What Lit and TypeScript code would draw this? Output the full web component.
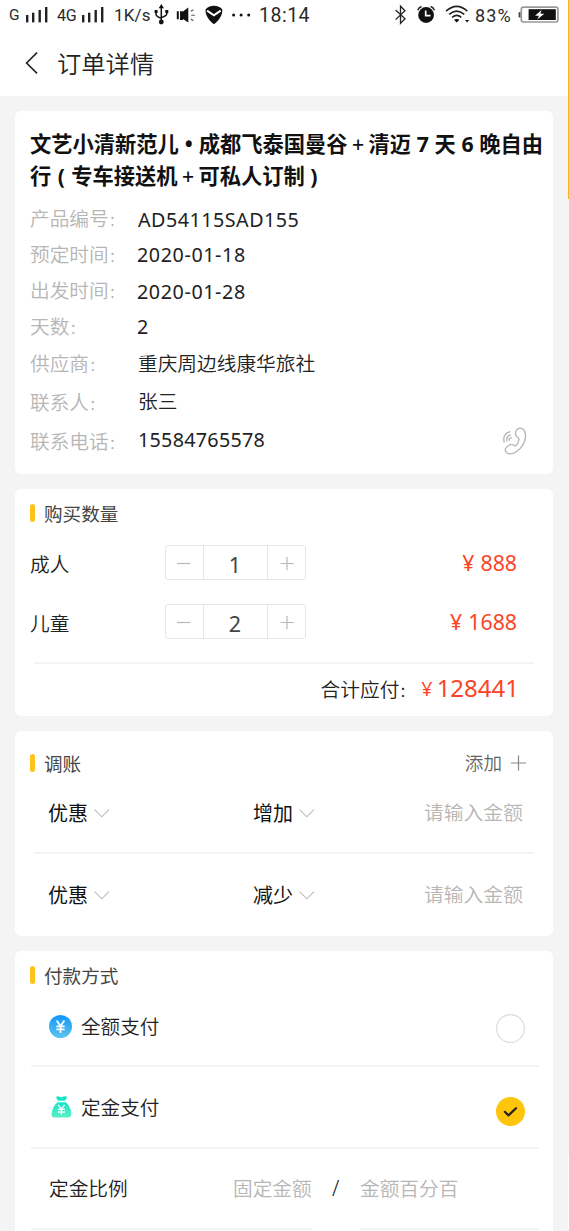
import { LitElement, html, css } from "lit";
import { customElement, property } from "lit/decorators.js";

const base = css`
  * { box-sizing: border-box; }
  svg { display: block; overflow: visible; }
`;

@customElement("status-bar")
class StatusBar extends LitElement {
  static styles = [base, css`
    :host {
      display: grid;
      grid-template-columns: 17px 31px 25px 31px 41px 21px 29px 27px 27px 136px 22px 29px 29px 43px 41px;
      padding-left: 9px;
      height: 31px;
      line-height: 31px;
      font-family: Roboto, "Liberation Sans", sans-serif;
      color: #2a2a2a;
      white-space: nowrap;
    }
    .g { font-size: 15.5px; }
    .net { font-size: 16px; letter-spacing: -0.2px; }
    .speed { font-size: 17px; letter-spacing: 0.2px; padding-left: 1px; }
    .time { font-size: 19.5px; letter-spacing: 0.5px; padding-left: 1px; }
    .pct { font-size: 18px; letter-spacing: 1.1px; padding-left: 1px; }
  `];
  bars() {
    return html`<svg width="23" height="31" viewBox="0 0 23 31" fill="#222">
      <rect x="0" y="15" width="2.4" height="7.4"/><rect x="6" y="12.7" width="2.4" height="9.7"/>
      <rect x="12.5" y="10" width="2.4" height="12.4"/><rect x="19" y="7" width="2.4" height="15.4"/>
    </svg>`;
  }
  render() {
    return html`
      <span class="g">G</span>${this.bars()}
      <span class="net">4G</span>${this.bars()}
      <span class="speed">1K/s</span>
      <svg width="15" height="31" viewBox="0 0 15 31" fill="none" stroke="#111" stroke-width="1.5">
        <path d="M7.3 7V22M2 11v3.2q0 2.2 5.3 4M12.8 11v2.8q0 2.2-5.5 3.8"/>
        <path d="M7.3 4L10 8.3H4.6ZM.6 10h3v3h-3zM11.3 10h3v3h-3z" fill="#111" stroke="none"/>
        <circle cx="7.3" cy="22" r="2.4" fill="#111" stroke="none"/>
      </svg>
      <svg width="20" height="31" viewBox="-1 0 20 31" fill="#111">
        <path d="M.8 11.3h2v8h-2zM4 11.2h3V20H4zM7 11.5L12.3 7.6V22.6L7 19Z"/>
        <path d="M14.8 11.3l2.6-1.6M15.2 15.3h3.6M14.8 19l2.6 1.8" stroke="#555" stroke-width="1.1"/>
      </svg>
      <svg width="19" height="31" viewBox="-.7 0 19 31">
        <path d="M9.2 5.8C13 5.8 15.5 7.2 17.5 9.2C18.3 14.5 14.5 20.5 9.2 24.2C4 20.5 0 14.5 1 9.2C3 7.2 5.5 5.8 9.2 5.8Z" fill="#111"/>
        <path d="M2.4 10.6L9.2 15.4L16 10.6" fill="none" stroke="#fff" stroke-width="1.9"/>
      </svg>
      <svg width="20" height="31" viewBox="-.5 0 20 31" fill="#111">
        <circle cx="2.1" cy="14.9" r="1.5"/><circle cx="9.6" cy="14.9" r="1.5"/><circle cx="17.2" cy="14.9" r="1.5"/>
      </svg>
      <span class="time">18:14</span>
      <svg width="12" height="31" viewBox="-.8 0 12 31" fill="none" stroke="#222" stroke-width="1.3">
        <path d="M.8 10L10.2 18.8L5.7 23.4V6.2L10.2 10.8L.8 19.6"/>
      </svg>
      <svg width="19" height="31" viewBox="-.5 0 19 31" fill="none">
        <circle cx="9.6" cy="15" r="7.9" fill="#111"/>
        <path d="M9.2 10.4V15.7H14" stroke="#fff" stroke-width="1.7"/>
        <path d="M1.3 10.2Q2.3 7.5 5 6.5M14.2 6.5Q16.9 7.5 17.9 10.2" stroke="#222" stroke-width="1.5"/>
      </svg>
      <svg width="23" height="31" viewBox="-.7 0 23 31" fill="none" stroke="#222" stroke-width="1.6">
        <path d="M.4 11.2Q11 1.6 21.6 11.2M3.4 14.4Q11 7.7 18.6 14.4M6.4 17.4Q11 13.5 15.6 17.4"/>
        <path d="M8.2 19.8Q11 18 13.8 19.8L11 22.6ZM19.4 20h4l-2 2.4z" fill="#111" stroke="none"/>
      </svg>
      <span class="pct">83%</span>
      <svg width="41" height="31" viewBox="-1 0 41 31">
        <rect x="3.3" y="7.1" width="36.6" height="14.9" rx="2.2" fill="#fff" stroke="#999" stroke-width="1.7"/>
        <path d="M.6 12.6Q1 11.9 2.4 12V17.6Q1 17.7.6 17Z" fill="#444"/>
        <rect x="10.6" y="9.2" width="27.2" height="10.8" fill="#111"/>
        <path d="M23.6 10L17 15.7H21L19.2 19.4L26.3 13.8H22.4Z" fill="#fff"/>
      </svg>`;
  }
}

@customElement("section-title")
class SectionTitle extends LitElement {
  static styles = [base, css`
    :host { display: flex; align-items: center; height: 20px; font-size: 18.6px; line-height: 20px; color: #444; }
    .bar { width: 5px; height: 18px; border-radius: 2.5px; background: #fec21b; margin-right: 9px; }
    .label { flex: 1; padding-top: 1px; }
  `];
  render() {
    return html`<span class="bar"></span><span class="label"><slot></slot></span><slot name="action"></slot>`;
  }
}

@customElement("quantity-row")
class QuantityRow extends LitElement {
  @property() label = "";
  @property() count = "";
  @property() price = "";
  static styles = [base, css`
    :host { display: grid; grid-template-columns: 135px 141px 1fr; height: 35px; line-height: 35px; padding-right: 36px; }
    .label { font-size: 19.7px; color: #222; padding-top: 2px; font-weight: 350; }
    .stepper { display: grid; grid-template-columns: 37px 65px 37px; border: 1px solid #e6e6e6; border-radius: 3px; height: 35px; }
    .stepper > * { height: 33px; line-height: 37px; }
    .value { border: solid #e6e6e6; border-width: 0 1px; text-align: center; font-size: 21.5px; color: #444; padding-right: 1px; }
    .price { display: flex; justify-content: flex-end; gap: 6px; font-size: 21.3px; color: #fb4526; }
  `];
  render() {
    return html`
      <span class="label">${this.label}</span>
      <div class="stepper">
        <svg width="37" height="33" viewBox="0 0 37 33"><path d="M11 17.5H24.2" stroke="#b8b8b8" stroke-width="1.2"/></svg>
        <span class="value">${this.count}</span>
        <svg width="37" height="33" viewBox="0 0 37 33"><path d="M12.4 17.5H25.6M19 11V24.2" stroke="#b8b8b8" stroke-width="1.2"/></svg>
      </div>
      <span class="price"><span>¥</span><span>${this.price}</span></span>`;
  }
}

@customElement("adjust-row")
class AdjustRow extends LitElement {
  @property() kind = "";
  @property() direction = "";
  static styles = [base, css`
    :host { display: grid; grid-template-columns: 205px 171px 1fr; height: 30px; line-height: 30px; padding-left: 18px; font-size: 20px; color: #111; }
    .pick { display: flex; align-items: center; gap: 6px; }
    .text { padding-top: 1px; }
    .hint { color: #b6b6b6; font-size: 19.8px; font-weight: 350; }
  `];
  pick(text: string) {
    return html`<span class="pick"><span class="text">${text}</span>
      <svg width="16" height="9" viewBox="0 0 16 9" fill="none" stroke="#bbb" stroke-width="1.1"><path d="M.6 .6L7.8 7.8L15 .6"/></svg></span>`;
  }
  render() {
    return html`${this.pick(this.kind)}${this.pick(this.direction)}<span class="hint">请输入金额</span>`;
  }
}

@customElement("app-root")
class AppRoot extends LitElement {
  static styles = [base, css`
    :host {
      display: block; position: relative; width: 569px; height: 1231px; overflow: hidden;
      background: #f4f4f4; font-family: "Noto Sans", "Noto Sans CJK SC", sans-serif; color: #222; white-space: nowrap;
    }
    .edge { position: absolute; right: 0; top: 0; width: 1px; height: 199px; background: #f5b51c; }
    .edge-low { position: absolute; right: 0; top: 1154px; width: 1px; height: 75px; background: #fff; }
    .top { background: #fff; height: 96px; }
    .nav { display: flex; align-items: center; height: 65px; padding-left: 25px; gap: 19px; }
    .nav-title { font-size: 24.3px; line-height: 65px; font-weight: 350; color: #222; }
    .card { margin: 15px 16px 0 15px; background: #fff; border-radius: 6px; padding-left: 15px; }
    .info { height: 363px; padding-top: 17px; }
    .quantity { height: 227px; padding-top: 14px; }
    .adjust { height: 205px; padding-top: 22px; }
    .payment { height: 300px; padding-top: 14px; }
    .name { font-size: 21.25px; line-height: 32px; font-weight: 700; color: #111; height: 73.5px; }
    .line { display: flex; }
    .sep { width: 21px; text-align: center; font-weight: 500; }
    .dot { width: 20px; text-align: center; }
    .num { width: 23.5px; text-align: center; }
    .close { width: 18px; text-align: center; }
    .row { display: grid; grid-template-columns: 107px 1fr 50px; align-items: center; font-size: 19.7px; height: 36px; line-height: 26px; }
    .row-mid { height: 37px; }
    .row-tall { height: 41px; }
    .row-last { height: 38px; }
    .key { color: #b6b6b6; font-weight: 350; }
    .colon { font-size: 15px; }
    .val { color: #222; letter-spacing: 0.6px; }
    .val.code { letter-spacing: 0.5px; padding-left: 1px; }
    .val.digits { letter-spacing: 0.3px; padding: 0 0 6px 1px; }
    .val.han { letter-spacing: 0; padding-left: 1px; font-weight: 350; }
    .lift { padding-bottom: 2px; }
    .phone { margin-top: -2px; }
    .rows { display: grid; gap: 24px; margin-top: 22px; }
    .rule { height: 2px; background: #f4f4f4; margin: 0 14px 0 1px; }
    .quantity .rule, .adjust .rule { margin: 0 19px 0 4px; }
    .quantity .rule { margin-top: 22.5px; }
    .total { display: flex; justify-content: flex-end; height: 50px; line-height: 49px; padding-right: 34px; font-size: 19.7px; }
    .total .due { margin-right: 7px; font-weight: 350; padding-top: 1px; }
    .total .cny { color: #fb4526; margin-right: 4px; }
    .total .sum { color: #fb4526; font-size: 24px; line-height: 47px; }
    .add { display: flex; align-items: center; gap: 9px; font-size: 18.6px; font-weight: 350; color: #666; padding-right: 27px; }
    .adjust adjust-row { margin-top: 24.5px; }
    .adjust .rule { margin-top: 24px; }
    .adjust .rule + adjust-row { margin-top: 26px; }
    .pay { display: grid; grid-template-columns: 32px 1fr 30px; align-items: center; height: 80px; padding: 2px 27px 0 19px; font-size: 19.6px; line-height: 30px; font-weight: 350; }
    .first { padding-top: 3px; }
    .mark { margin-top: 4px; }
    .mark.on { margin-top: 7px; }
    .bag { margin-top: -2px; }
    .ratio { display: grid; grid-template-columns: 19px 184px 79px 48px 179px; height: 79px; line-height: 79px; font-size: 19.7px; font-weight: 350; }
    .ghost { color: #b6b6b6; }
    .slash { padding-left: 20px; font-size: 21px; }
    .lines { display: grid; grid-template-columns: 281px 179px; gap: 48px; padding-left: 1px; }
    .lines span { height: 2px; background: #f4f4f4; }
  `];

  key(text: string) {
    return html`<span class="key">${text}<span class="colon">：</span></span>`;
  }

  info(key: string, val: string, cls: string, row = "") {
    return html`<div class="row ${row}">${this.key(key)}<span class="val ${cls}">${val}</span></div>`;
  }

  render() {
    return html`
      <div class="top">
        <status-bar></status-bar>
        <div class="nav">
          <svg width="13" height="22" viewBox="0 0 13 22" fill="none" stroke="#222" stroke-width="1.6"><path d="M12 -.4L1.6 10L12 20.4"/></svg>
          <span class="nav-title">订单详情</span>
        </div>
      </div>

      <div class="card info">
        <div class="name">
          <div class="line"><span>文艺小清新范儿</span><span class="dot">•</span><span>成都飞泰国曼谷</span><span class="sep">+</span><span>清迈</span><span class="num">7</span><span>天</span><span class="num">6</span><span>晚自由</span></div>
          <div class="line"><span>行</span><span class="dot">(</span><span>专车接送机</span><span class="sep">+</span><span>可私人订制</span><span class="close">)</span></div>
        </div>
        ${this.info("产品编号", "AD54115SAD155", "code")}
        ${this.info("预定时间", "2020-01-18", "lift")}
        ${this.info("出发时间", "2020-01-28", "")}
        ${this.info("天数", "2", "lift")}
        ${this.info("供应商", "重庆周边线康华旅社", "han", "row-mid")}
        ${this.info("联系人", "张三", "han lift", "row-tall")}
        <div class="row row-last">
          ${this.key("联系电话")}<span class="val digits">15584765578</span>
          <svg class="phone" width="24" height="28" viewBox="0 .8 24 28" fill="none" stroke="#b8b8b8" stroke-width="1.4" stroke-linecap="round">
            <path d="M13.3 3.2C14.5 .8 18.5.2 20.8 2.6C23.4 5.6 23.2 12.5 19.6 18.2C16.4 23.4 10.5 27.2 6.3 26.6C2.6 26 1.2 22.6 3.2 20.4C5.2 18.3 8.2 15.8 10.8 18C12.2 19.4 13.2 18.6 14.6 16.4C16 13.6 16.8 11.6 15.2 10.6C12.4 9 11.9 6 13.3 3.2Z"/>
            <path d="M1.2 14.8C-.2 9.6 2.2 5.6 6.8 4.6M3.8 13.6C3.2 10.6 4.6 8.6 7.4 7.8M6.2 13C6 11.6 6.8 10.8 8.4 10.4"/>
          </svg>
        </div>
      </div>

      <div class="card quantity">
        <section-title>购买数量</section-title>
        <div class="rows">
          <quantity-row label="成人" count="1" price="888"></quantity-row>
          <quantity-row label="儿童" count="2" price="1688"></quantity-row>
        </div>
        <div class="rule"></div>
        <div class="total"><span class="due">合计应付<span class="colon">：</span></span><span class="cny">¥</span><span class="sum">128441</span></div>
      </div>

      <div class="card adjust">
        <section-title>调账
          <span class="add" slot="action">添加
            <svg width="15" height="15" viewBox="0 0 15 15" stroke="#888" stroke-width="1.2"><path d="M0 7H15M7.5 -.5V14.5"/></svg>
          </span>
        </section-title>
        <adjust-row kind="优惠" direction="增加"></adjust-row>
        <div class="rule"></div>
        <adjust-row kind="优惠" direction="减少"></adjust-row>
      </div>

      <div class="card payment">
        <section-title>付款方式</section-title>
        <div class="pay first">
          <svg width="23" height="23" viewBox="0 0 23 23">
            <defs><linearGradient id="blue" x1="0" y1="0" x2="0" y2="1"><stop offset="0" stop-color="#1296fb"/><stop offset="1" stop-color="#5cc4ee"/></linearGradient></defs>
            <circle cx="11.5" cy="11.5" r="11.5" fill="url(#blue)"/>
            <path d="M7.6 5.6L11.5 11L15.4 5.6M11.5 11V18M7.4 11.4H15.6M7.4 14.4H15.6" fill="none" stroke="#fff" stroke-width="1.7"/>
          </svg>
          <span>全额支付</span>
          <svg class="mark" width="29" height="29" viewBox="0 0 29 29"><circle cx="14.5" cy="14.5" r="13.9" fill="#fff" stroke="#ddd" stroke-width="1.2"/></svg>
        </div>
        <div class="rule"></div>
        <div class="pay">
          <svg class="bag" width="23" height="22" viewBox="0 0 23 22">
            <defs><linearGradient id="mint" x1="0" y1="0" x2="0" y2="1"><stop offset="0" stop-color="#12e6c4"/><stop offset="1" stop-color="#5cefc8"/></linearGradient></defs>
            <path d="M7.2 1Q8.2-.4 9.8.6Q12.2 1.8 14.2.6Q16.4-.4 18 .8Q17.8 2.6 15.8 4.8H9.4Q7.4 3 7.2 1Z" fill="#12e6c8"/>
            <path d="M8.6 6.2H16.6C20.4 9.4 22.4 13.4 22.2 18.4Q22 21.4 19.4 21.4H5.2Q2.6 21.4 2.6 18.4C2.8 13.4 4.8 9.4 8.6 6.2Z" fill="url(#mint)"/>
            <path d="M9.2 8.8L12.4 13.2L15.6 8.8M12.4 13V18.8M8.8 13.4H16M8.8 16H16" fill="none" stroke="#fff" stroke-width="1.3"/>
          </svg>
          <span>定金支付</span>
          <svg class="mark on" width="29" height="29" viewBox="0 0 29 29"><circle cx="14.5" cy="14.5" r="14.5" fill="#fec50b"/><path d="M8.8 14.8L12.5 18.4L20 11.2" fill="none" stroke="#222" stroke-width="2.2" stroke-linecap="round" stroke-linejoin="round"/></svg>
        </div>
        <div class="rule"></div>
        <div class="ratio"><span></span><span>定金比例</span><span class="ghost">固定金额</span><span class="slash">/</span><span class="ghost">金额百分百</span></div>
        <div class="lines"><span></span><span></span></div>
      </div>
      <div class="edge"></div>
      <div class="edge-low"></div>`;
  }
}
